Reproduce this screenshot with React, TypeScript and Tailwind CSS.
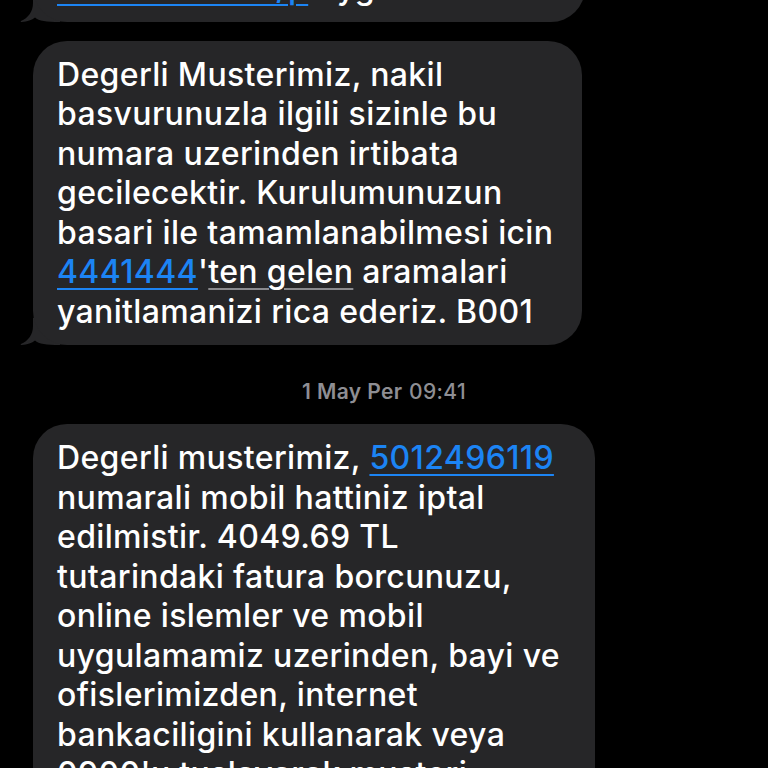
import React from 'react'

function Tail() {
  return (
    <svg
      className="absolute left-[-13px] bottom-0 w-[40px] h-[27px]"
      viewBox="0 0 40 27"
      aria-hidden
    >
      <path
        d="M13 0 L13 8 C13 17 8 23 1 26 C0.4 26.4 0.6 26.9 1.4 26.9 C7 27 12 25 15 22.5 C19 26 26 27 40 27 L40 0 Z"
        fill="#262628"
      />
    </svg>
  )
}

function Bubble({ width, tail, children, className = '' }: { width: string; tail?: boolean; children: React.ReactNode; className?: string }) {
  return (
    <div className={`relative ml-[33px] ${width} ${className}`}>
      {tail && <Tail />}
      <div className="relative rounded-[34px] bg-[#262628] pl-6 pr-4 py-[14px] text-white text-[32px] leading-[39.5px] tracking-[0.35px] font-medium">
        {children}
      </div>
    </div>
  )
}

const Line = ({ children }: { children: React.ReactNode }) => (
  <div className="whitespace-nowrap">{children}</div>
)

const link = 'text-[#1c84f4] underline decoration-[#1c84f4] decoration-2 underline-offset-[5px]'

export default function App() {
  return (
    <div
      className="w-[768px] h-[768px] overflow-hidden bg-black"
      style={{ fontFamily: 'Inter, "Noto Sans", sans-serif' }}
    >
      <div className="flex flex-col -mt-[46px]">
        <Bubble width="w-[552px]" tail>
          <Line>
            <span className={link}>turktelekom.tr/p</span> uygun
          </Line>
        </Bubble>

        <Bubble width="w-[549px]" tail className="mt-[19px]">
          <Line>Degerli Musterimiz, nakil</Line>
          <Line>basvurunuzla ilgili sizinle bu</Line>
          <Line>numara uzerinden irtibata</Line>
          <Line>gecilecektir. Kurulumunuzun</Line>
          <Line>basari ile tamamlanabilmesi icin</Line>
          <Line>
            <span className={link}>4441444</span>'
            <span className="underline decoration-[#8a8a8e] decoration-2 underline-offset-[5px]">ten gelen</span> aramalari
          </Line>
          <Line>yanitlamanizi rica ederiz. B001</Line>
        </Bubble>

        <div className="mt-[35px] h-6 text-center text-[21px] leading-6 tracking-[0.4px] text-[#8e8e93]">
          <span className="font-semibold">1 May Per</span> <span className="font-medium">09:41</span>
        </div>

        <Bubble width="w-[562px]" className="mt-5">
          <Line>
            Degerli musterimiz, <span className={link}>5012496119</span>
          </Line>
          <Line>numarali mobil hattiniz iptal</Line>
          <Line>edilmistir. 4049.69 TL</Line>
          <Line>tutarindaki fatura borcunuzu,</Line>
          <Line>online islemler ve mobil</Line>
          <Line>uygulamamiz uzerinden, bayi ve</Line>
          <Line>ofislerimizden, internet</Line>
          <Line>bankaciligini kullanarak veya</Line>
          <Line>0900'u tuslayarak musteri</Line>
          <Line>hizmetlerimizden odeyebilirsiniz.</Line>
        </Bubble>
      </div>
    </div>
  )
}
